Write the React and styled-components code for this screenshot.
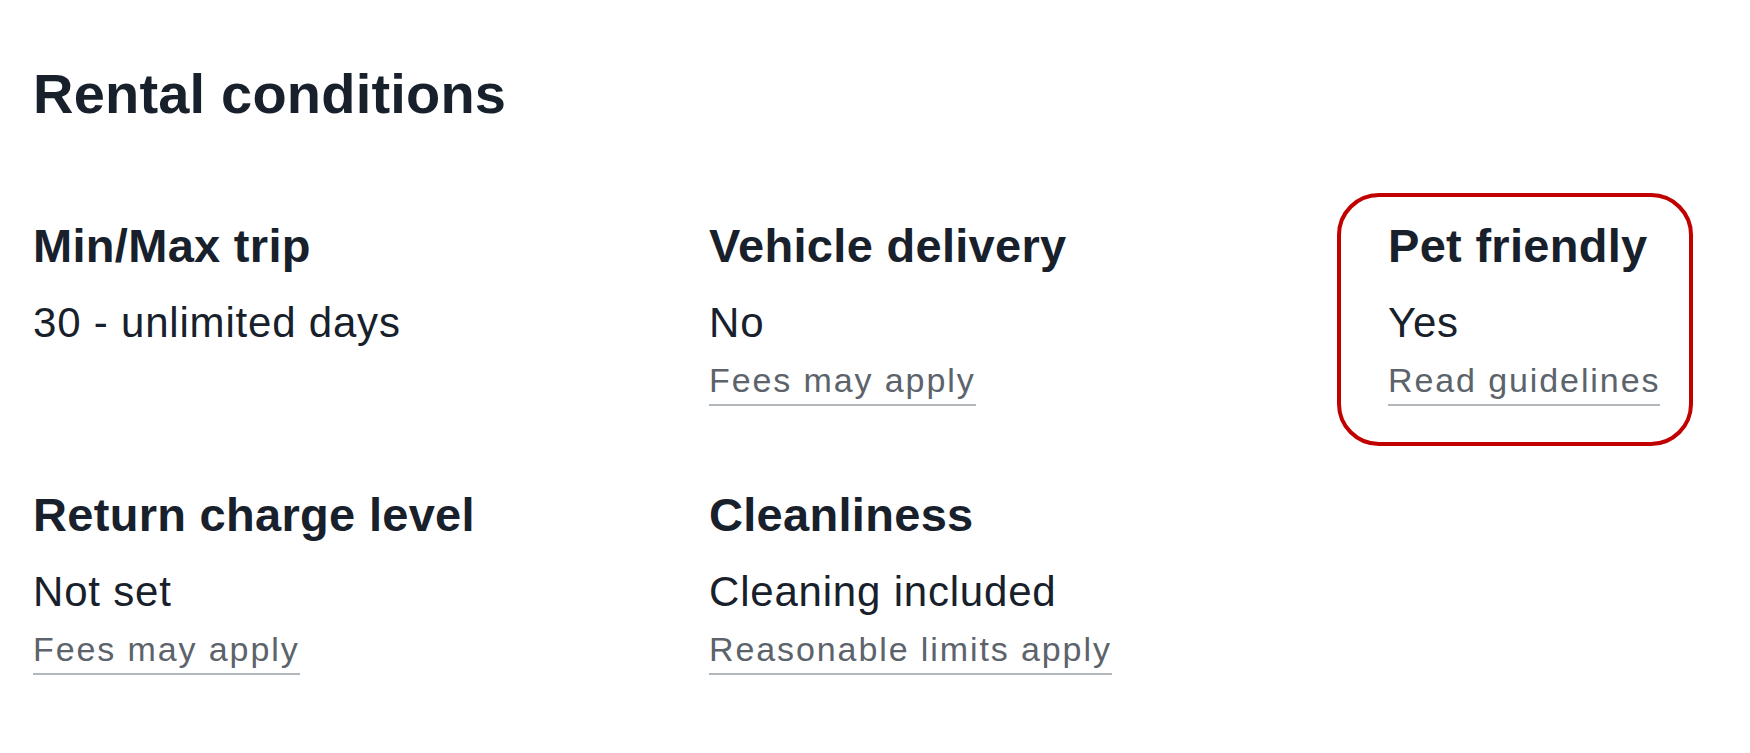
import styled, { createGlobalStyle } from 'styled-components';

const conditions = [
  { title: 'Min/Max trip', value: '30 - unlimited days' },
  { title: 'Vehicle delivery', value: 'No', note: 'Fees may apply' },
  { title: 'Pet friendly', value: 'Yes', note: 'Read guidelines', highlighted: true },
  { title: 'Return charge level', value: 'Not set', note: 'Fees may apply' },
  { title: 'Cleanliness', value: 'Cleaning included', note: 'Reasonable limits apply' },
];

function App() {
  return (
    <>
      <GlobalStyle />
      <Section>
        <Title>Rental conditions</Title>
        <Grid>
          {conditions.map((item) => (
            <Cell key={item.title} $highlighted={item.highlighted}>
              <Heading>{item.title}</Heading>
              <Value>{item.value}</Value>
              {item.note && <Note>{item.note}</Note>}
            </Cell>
          ))}
        </Grid>
      </Section>
    </>
  );
}

const GlobalStyle = createGlobalStyle`
  html, body {
    margin: 0;
    padding: 0;
    background: #fff;
  }

  body {
    font-family: "Liberation Sans", Arial, sans-serif;
    color: #18212b;
  }
`;

const Section = styled.section`
  padding: 62px 0 0 33px;
`;

const Title = styled.h2`
  margin: 0;
  font-size: 56px;
  line-height: 64px;
  font-weight: 700;
  letter-spacing: 0.2px;
`;

const Grid = styled.div`
  display: grid;
  grid-template-columns: 676px 679px auto;
  row-gap: 81px;
  margin-top: 92px;
  align-items: start;
`;

const Cell = styled.div`
  position: relative;
  justify-self: start;
  display: flex;
  flex-direction: column;
  align-items: flex-start;

  ${({ $highlighted }) =>
    $highlighted &&
    `
    &::after {
      content: '';
      position: absolute;
      top: -25px;
      left: -51px;
      width: 356px;
      height: 253px;
      box-sizing: border-box;
      border: 4px solid #c10000;
      border-radius: 42px;
      pointer-events: none;
    }
  `}
`;

const Heading = styled.h3`
  margin: 0;
  font-size: 47px;
  line-height: 56px;
  font-weight: 700;
  letter-spacing: 0.3px;
`;

const Value = styled.div`
  margin-top: 24px;
  font-size: 42px;
  line-height: 50px;
  letter-spacing: 0.8px;
`;

const Note = styled.a`
  display: inline-block;
  margin-top: 12px;
  padding-bottom: 4px;
  font-size: 34px;
  line-height: 40px;
  letter-spacing: 1.9px;
  color: #5c636b;
  text-decoration: none;
  border-bottom: 2px solid #b2b7bc;
  cursor: pointer;
`;

export default App;
